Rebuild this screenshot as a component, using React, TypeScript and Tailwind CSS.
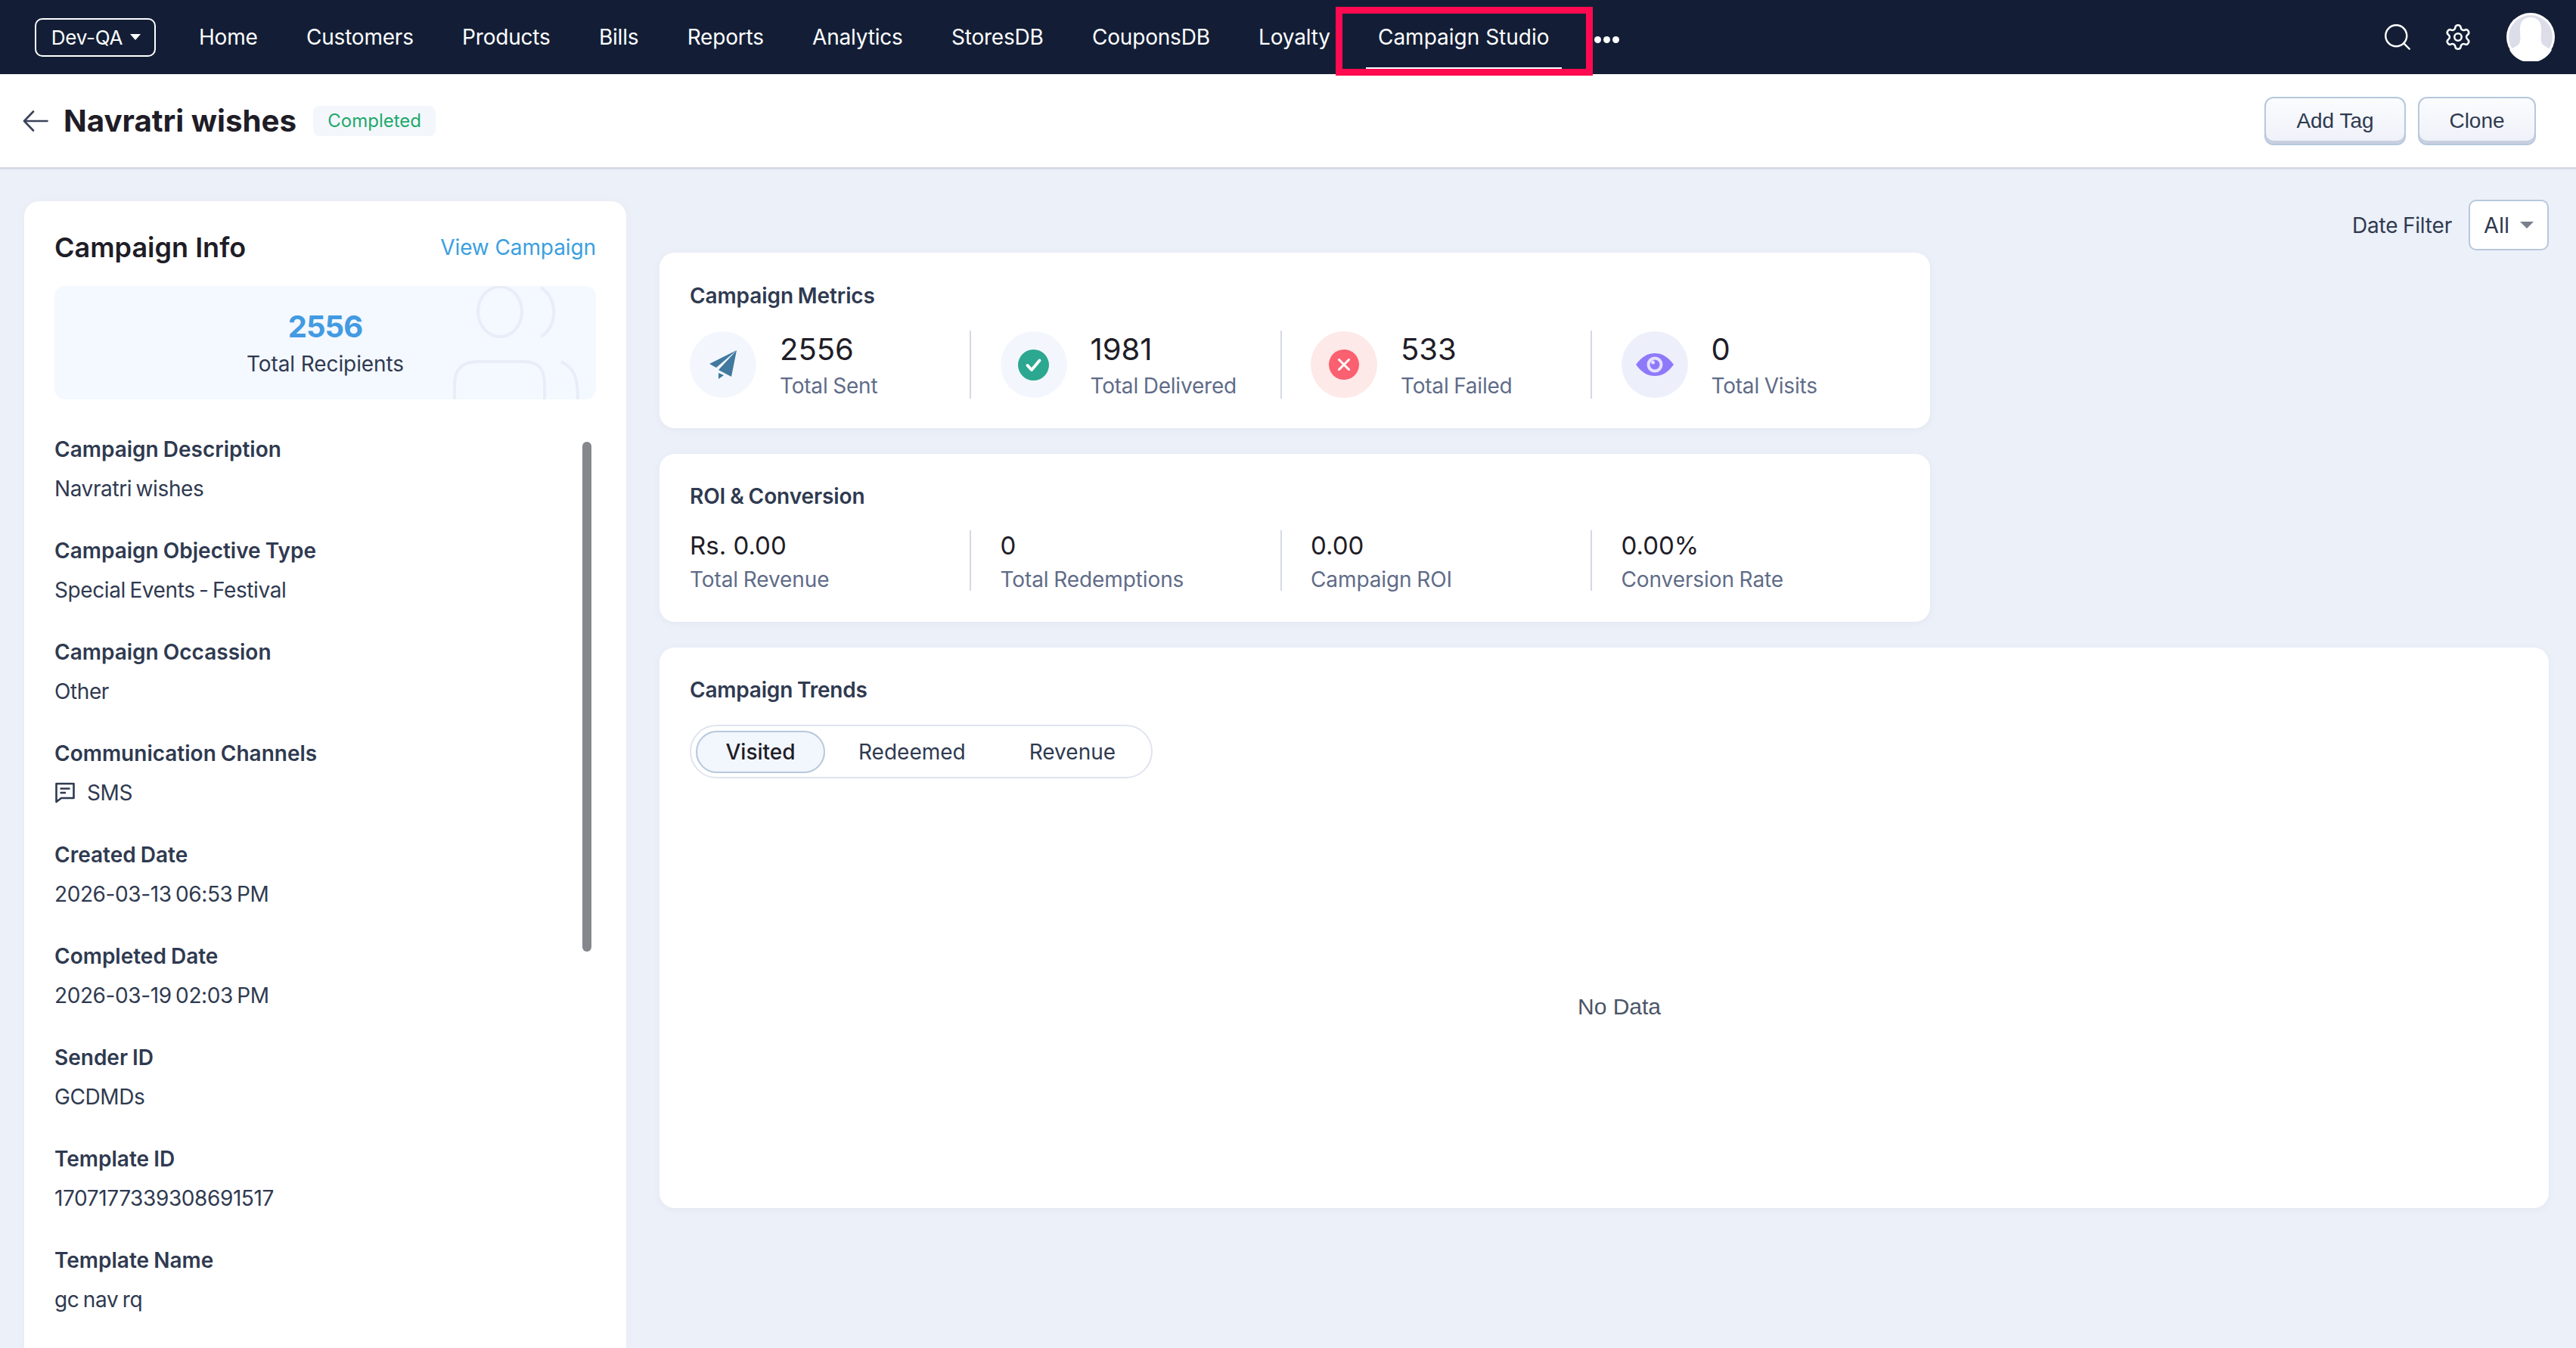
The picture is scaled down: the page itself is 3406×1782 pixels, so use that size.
import React from 'react';
import { Search, Settings } from 'lucide-react';

const navItems = ['Home', 'Customers', 'Products', 'Bills', 'Reports', 'Analytics', 'StoresDB', 'CouponsDB', 'Loyalty'];

const infoFields = [
  { label: 'Campaign Description', value: 'Navratri wishes' },
  { label: 'Campaign Objective Type', value: 'Special Events - Festival' },
  { label: 'Campaign Occassion', value: 'Other' },
  { label: 'Communication Channels', value: 'SMS', sms: true },
  { label: 'Created Date', value: '2026-03-13 06:53 PM' },
  { label: 'Completed Date', value: '2026-03-19 02:03 PM' },
  { label: 'Sender ID', value: 'GCDMDs' },
  { label: 'Template ID', value: '1707177339308691517' },
  { label: 'Template Name', value: 'gc nav rq' },
];

const PlaneIcon = () => (
  <svg width="36" height="38" viewBox="0 0 36 38" fill="#41799f">
    <path d="M36 0 L0 18 L9 23 Z" />
    <path d="M36 0 L12 26 L29 35 Z" />
    <path d="M12 30 L12 38 L19 33 Z" />
  </svg>
);

const CheckIcon = () => (
  <svg width="41" height="41" viewBox="0 0 41 41">
    <circle cx="20.5" cy="20.5" r="20.5" fill="#2ca790" />
    <path d="M12.5 21 L18 27 L28.5 14.5" fill="none" stroke="#ffffff" strokeWidth="4" strokeLinecap="round" strokeLinejoin="round" />
  </svg>
);

const FailIcon = () => (
  <svg width="40" height="40" viewBox="0 0 40 40">
    <circle cx="20" cy="20" r="20" fill="#fb6070" />
    <path d="M13.5 13.5 L26.5 26.5 M26.5 13.5 L13.5 26.5" fill="none" stroke="#ffffff" strokeWidth="3" strokeLinecap="round" />
  </svg>
);

const EyeIcon = () => (
  <svg width="50" height="30" viewBox="0 0 50 30">
    <path d="M0 15 C8 4 16 0 25 0 C34 0 42 4 50 15 C42 26 34 30 25 30 C16 30 8 26 0 15 Z" fill="#8f79fb" />
    <circle cx="25" cy="15" r="10.5" fill="#e6e2fe" />
    <circle cx="25" cy="15" r="6.5" fill="#8f79fb" />
    <circle cx="22.5" cy="12" r="2.5" fill="#e6e2fe" />
  </svg>
);

const SmsIcon = () => (
  <svg width="28" height="28" viewBox="0 0 28 28" fill="none" stroke="#2f3a50" strokeWidth="2.6">
    <path d="M2.5 2 H25.5 V21 H9 L2.5 26 Z" strokeLinejoin="round" />
    <path d="M7.5 8.5 H20.5 M7.5 14 H15" />
  </svg>
);

const BackArrow = () => (
  <svg width="34" height="28" viewBox="0 0 34 28" fill="none" stroke="#3a4358" strokeWidth="2.6" strokeLinecap="round" strokeLinejoin="round">
    <path d="M32.5 14 H2 M14 1.5 L2 14 L14 26.5" />
  </svg>
);

const Avatar = () => (
  <svg width="64" height="64" viewBox="0 0 64 64">
    <circle cx="32" cy="32" r="32" fill="#ffffff" />
    <circle cx="32" cy="32" r="29" fill="#dcdde9" />
    <path d="M32 6 C42 6 47 13 46 25 C45.500 34 45 38 48 42 C53 46 58 47 60 49 A32 32 0 0 1 4 49 C6 47 11 46 16 42 C19 38 18.500 34 18 25 C17 13 22 6 32 6 Z" fill="#ffffff" />
  </svg>
);

const metrics = [
  { value: '2556', label: 'Total Sent', bg: 'bg-[#f3f7fd]', icon: <PlaneIcon /> },
  { value: '1981', label: 'Total Delivered', bg: 'bg-[#f3f7fd]', icon: <CheckIcon /> },
  { value: '533', label: 'Total Failed', bg: 'bg-[#fde9e7]', icon: <FailIcon /> },
  { value: '0', label: 'Total Visits', bg: 'bg-[#edf0fb]', icon: <EyeIcon /> },
];

const roiStats = [
  { value: 'Rs. 0.00', label: 'Total Revenue' },
  { value: '0', label: 'Total Redemptions' },
  { value: '0.00', label: 'Campaign ROI' },
  { value: '0.00%', label: 'Conversion Rate' },
];

const App: React.FC = () => {
  return (
    <div className="relative h-screen overflow-hidden bg-[#ecf0f8] font-['Inter',sans-serif] text-[#2f3a50]">
      {/* Top nav */}
      <div className="flex h-[98px] items-center bg-[#131e36] pl-[46px] pr-[28px] text-white">
        <div className="flex h-[51px] w-[160px] items-center justify-center gap-[10px] rounded-[10px] border-2 border-white pl-[2px] text-[26px] tracking-[-0.2px]">
          Dev-QA
          <span className="h-0 w-0 border-x-[7px] border-t-[8px] border-x-transparent border-t-white" />
        </div>
        <div className="ml-[57px] flex items-center gap-[64.3px] text-[28px] tracking-[-0.2px]">
          {navItems.map((item) => (
            <span key={item}>{item}</span>
          ))}
        </div>
        <div className="relative ml-[47px] flex h-[98px] w-[259px] items-center justify-center text-[28px]">
          Campaign Studio
          <span className="absolute bottom-[7px] left-0 h-[2px] w-full bg-white" />
        </div>
        <div className="ml-[43px] mt-[6px] flex gap-[3px]">
          <span className="h-[9px] w-[9px] rounded-full bg-white" />
          <span className="h-[9px] w-[9px] rounded-full bg-white" />
          <span className="h-[9px] w-[9px] rounded-full bg-white" />
        </div>
        <div className="ml-auto flex items-center">
          <Search size={42} strokeWidth={1.4} />
          <Settings size={38} strokeWidth={1.6} className="ml-[40px]" />
          <div className="ml-[45px]"><Avatar /></div>
        </div>
      </div>

      {/* Highlight box drawn over the nav */}
      <div className="absolute left-[1766px] top-[9px] h-[91px] w-[340px] border-[9px] border-[#ff0a50]" />

      {/* Page header */}
      <div className="flex h-[126px] items-center border-b-[3px] border-[#d8d9e6] bg-white pl-[30px] pr-[53px]">
        <BackArrow />
        <h1 className="ml-[20px] mt-[2px] text-[40.3px] font-bold text-[#1f1d27]">Navratri wishes</h1>
        <span className="ml-[22px] flex h-[40px] w-[162px] items-center justify-center rounded-[8px] bg-[#f3f7fc] text-[24px] text-[#1fa96b]">Completed</span>
        <div className="ml-auto flex gap-[16px] font-['Liberation_Sans',sans-serif] text-[28px]">
          <button className="h-[64px] w-[187px] rounded-[12px] border-2 border-[#b6c8dc] bg-gradient-to-b from-[#fbfcff] to-[#eef1f8] shadow-[inset_0_-4px_0_#c9cfe0]">Add Tag</button>
          <button className="h-[64px] w-[156px] rounded-[12px] border-2 border-[#b6c8dc] bg-gradient-to-b from-[#fbfcff] to-[#eef1f8] shadow-[inset_0_-4px_0_#c9cfe0]">Clone</button>
        </div>
      </div>

      <div className="flex items-start">
        {/* Campaign info card */}
        <div className="relative ml-[32px] mt-[42px] w-[796px] shrink-0 rounded-[20px] bg-white px-[40px] pt-[38px] pb-[40px] shadow-[0_0_8px_#e6eaf4]">
          <div className="flex h-[46px] items-center justify-between">
            <h2 className="text-[36px] font-semibold text-[#1f1d27]">Campaign Info</h2>
            <span className="text-[28px] tracking-[-0.1px] text-[#3b9fe0]">View Campaign</span>
          </div>

          <div className="relative mt-[28px] flex h-[150px] flex-col items-center overflow-hidden rounded-[14px] bg-[#f4f8ff] pt-[28px]">
            <svg className="absolute left-[520px] top-0" width="180" height="150" viewBox="0 0 180 150" fill="none" stroke="#e8edf8" strokeWidth="4">
              <ellipse cx="69" cy="34" rx="29" ry="33" />
              <path d="M123 2 C146 16 146 54 123 67" />
              <path d="M9 152 V130 C9 110 20 100 40 100 H100 C120 100 128 110 128 130 V152" />
              <path d="M150 100 C170 110 172 125 172 152" />
            </svg>
            <span className="text-[40px] font-bold leading-[52px] tracking-[-1px] text-[#429be2]">2556</span>
            <span className="mt-[3px] text-[28px] leading-[40px] tracking-[-0.1px]">Total Recipients</span>
          </div>

          <div className="mt-[46px]">
            {infoFields.map((f) => (
              <div key={f.label} className="mb-[42px]">
                <div className="h-[40px] text-[28px] font-semibold leading-[40px] [word-spacing:-1px]">{f.label}</div>
                <div className="mt-[12px] flex h-[40px] items-center gap-[15px] text-[28px] leading-[40px] tracking-[-0.4px] [word-spacing:-2px]">
                  {f.sms && <SmsIcon />}
                  {f.value}
                </div>
              </div>
            ))}
          </div>

          {/* Scrollbar thumb */}
          <div className="absolute left-[738px] top-[318px] h-[674px] w-[12px] rounded-full bg-[#85878c]" />
        </div>

        <div className="ml-[44px] flex-1 pr-[36px] pt-[40px]">
          {/* Date filter */}
          <div className="flex h-[67px] items-center justify-end gap-[22px]">
            <span className="text-[28px] tracking-[-0.2px] [word-spacing:-1px]">Date Filter</span>
            <div className="flex h-[67px] w-[106px] items-center justify-center gap-[14px] rounded-[10px] border-2 border-[#b6c8dc] bg-white text-[29px]">
              All
              <span className="h-0 w-0 border-x-[9px] border-t-[9px] border-x-transparent border-t-[#7a7f8c]" />
            </div>
          </div>

          {/* Campaign metrics */}
          <div className="mt-[3px] h-[232px] w-[1680px] rounded-[20px] bg-white pl-[40px] pt-[38px] shadow-[0_2px_8px_#e2e6f2]">
            <h3 className="text-[28px] font-semibold leading-[38px] tracking-[-0.1px] [word-spacing:-1px]">Campaign Metrics</h3>
            <div className="mt-[27px] flex">
              {metrics.map((m, i) => (
                <div key={m.label} className={`mr-[38.5px] flex h-[90px] w-[372px] shrink-0 items-center ${i < 3 ? 'border-r-2 border-[#d5d8e6]' : ''}`}>
                  <div className={`flex h-[88px] w-[88px] items-center justify-center rounded-full ${m.bg}`}>{m.icon}</div>
                  <div className="ml-[31px] pt-[7px]">
                    <div className="text-[40px] leading-[48px] text-[#1f1d27]">{m.value}</div>
                    <div className="text-[28px] leading-[48px] tracking-[-0.2px] [word-spacing:-1px] text-[#5f6c88]">{m.label}</div>
                  </div>
                </div>
              ))}
            </div>
          </div>

          {/* ROI */}
          <div className="mt-[34px] h-[222px] w-[1680px] rounded-[20px] bg-white pl-[40px] pt-[37px] shadow-[0_2px_8px_#e2e6f2]">
            <h3 className="text-[28px] font-semibold leading-[38px] tracking-[-0.1px] [word-spacing:-1px]">ROI &amp; Conversion</h3>
            <div className="mt-[26px] flex">
              {roiStats.map((s, i) => (
                <div key={s.label} className={`mr-[38.5px] h-[80px] w-[372px] shrink-0 ${i < 3 ? 'border-r-2 border-[#d5d8e6]' : ''}`}>
                  <div className="text-[33px] leading-[40px] text-[#1f1d27]">{s.value}</div>
                  <div className="mt-[4px] text-[28px] leading-[42px] tracking-[-0.1px] [word-spacing:-1px] text-[#5f6c88]">{s.label}</div>
                </div>
              ))}
            </div>
          </div>

          {/* Trends */}
          <div className="mt-[34px] flex h-[741px] flex-col rounded-[20px] bg-white pl-[40px] pr-[40px] pt-[37px] shadow-[0_2px_8px_#e2e6f2]">
            <h3 className="text-[28px] font-semibold leading-[38px] tracking-[-0.2px] [word-spacing:-1px]">Campaign Trends</h3>
            <div className="mt-[27px] flex h-[71px] w-[612px] items-center rounded-full border-2 border-[#e0e4ef] pl-[6px] text-[28px]">
              <span className="flex h-[56px] w-[171px] items-center justify-center rounded-full border-2 border-[#b6c8dc] bg-[#f2f6fd] font-medium text-[#1f1d27]">Visited</span>
              <span className="ml-[44px]">Redeemed</span>
              <span className="ml-[84px]">Revenue</span>
            </div>
            <div className="flex flex-1 items-center justify-center pl-[40px] pt-[34px] font-['Liberation_Sans',sans-serif] text-[30px] text-[#4b5566]">No Data</div>
          </div>
        </div>
      </div>
    </div>
  );
};

export default App;
